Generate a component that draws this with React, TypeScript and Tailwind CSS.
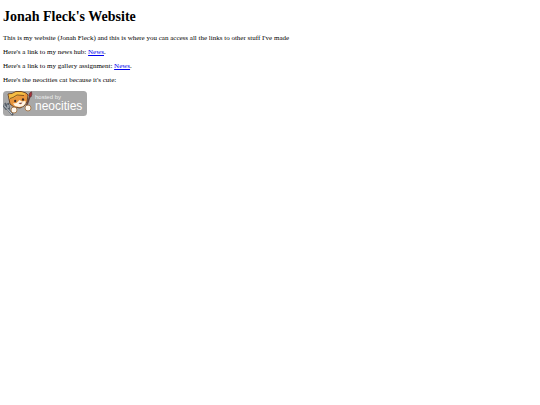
import type { ReactNode } from "react";

function PageLink({ children }: { children: ReactNode }) {
  return (
    <a href="#news" className="text-[#0000ee] underline">
      {children}
    </a>
  );
}

function NeocitiesBadge() {
  return (
    <svg viewBox="0 0 84 25" role="img" aria-label="Hosted by Neocities" className="mt-[7px] block h-[25px] w-[84px]">
      <rect width="84" height="25" rx="3.5" fill="#a8a8a8" />
      {/* fork */}
      <path d="M4 17 L10 24" stroke="#59616a" strokeWidth="2.2" />
      <path d="M0 14 L3 18 L6 17 L5 12 M2 12 L5 18" fill="none" stroke="#59616a" strokeWidth="1.9" />
      <path d="M1 14.5 L4 17.5 L9 23 M5 14 L5 17" fill="none" stroke="#dce4ea" strokeWidth=".9" />
      {/* cat head */}
      <path d="M5 3 L9 2.5 L13 .5 L18 .5 L23 2 L25 4 L24 11 L21 15 L17 17 L11 16 L7 13 L6 8Z" fill="#e9963c" stroke="#6b482b" strokeWidth="1" />
      <path d="M10 12.5 L13.5 12 L16.5 9 L19 10.5 L22.5 10 L22.5 12.5 L20 15.2 L16 16 L12 15Z" fill="#fff4e3" />
      <path d="M5.5 3.5 L9 3 L13 1 L18 1 L22.5 2.5 L21 4.5 L15 4.5 L10 7.5 L6.5 8Z" fill="#f5bd42" />
      <path d="M7 7.5 L10 6.5 L14 4 L21 4.5" fill="none" stroke="#855420" strokeWidth="1" />
      <ellipse cx="12.2" cy="10" rx="1.1" ry="1.2" fill="#3b2a24" />
      <ellipse cx="20" cy="8.5" rx="1.1" ry="1.2" fill="#3b2a24" />
      <path d="M15.5 12 Q17.5 14.5 19.5 11.5Z" fill="#874838" />
      {/* brush and paws */}
      <path d="M27 5 L23.5 15" stroke="#67433a" strokeWidth="1.7" />
      <path d="M26 5 Q25.5 2 28.5 .8 Q29.5 3 28 6Z" fill="#a92f38" stroke="#653033" strokeWidth=".7" />
      <ellipse cx="11" cy="19" rx="3" ry="3" fill="#fff8ed" stroke="#a27447" strokeWidth=".9" />
      <ellipse cx="25" cy="17" rx="3" ry="3" fill="#fff8ed" stroke="#a27447" strokeWidth=".9" />
      <text x="32" y="8" fill="#eeeeee" className="font-['Liberation_Sans',sans-serif] text-[6px]">hosted by</text>
      <text x="32" y="19" fill="#fff" className="font-['Liberation_Sans',sans-serif] text-[12px]">neocities</text>
    </svg>
  );
}

export default function App() {
  return (
    <main className="px-[3px] pt-[9px] font-['Liberation_Serif',serif] text-[7px] leading-[8px] text-black">
      <h1 className="mb-[9px] text-[14px] leading-4 font-bold">Jonah Fleck's Website</h1>
      <div className="flex flex-col gap-[6px]">
        <p>This is my website (Jonah Fleck) and this is where you can access all the links to other stuff I've made</p>
        <p>Here's a link to my news hub: <PageLink>News</PageLink>.</p>
        <p>Here's a link to my gallery assignment: <PageLink>News</PageLink>.</p>
        <p>Here's the neocities cat because it's cute:</p>
      </div>
      <NeocitiesBadge />
    </main>
  );
}
